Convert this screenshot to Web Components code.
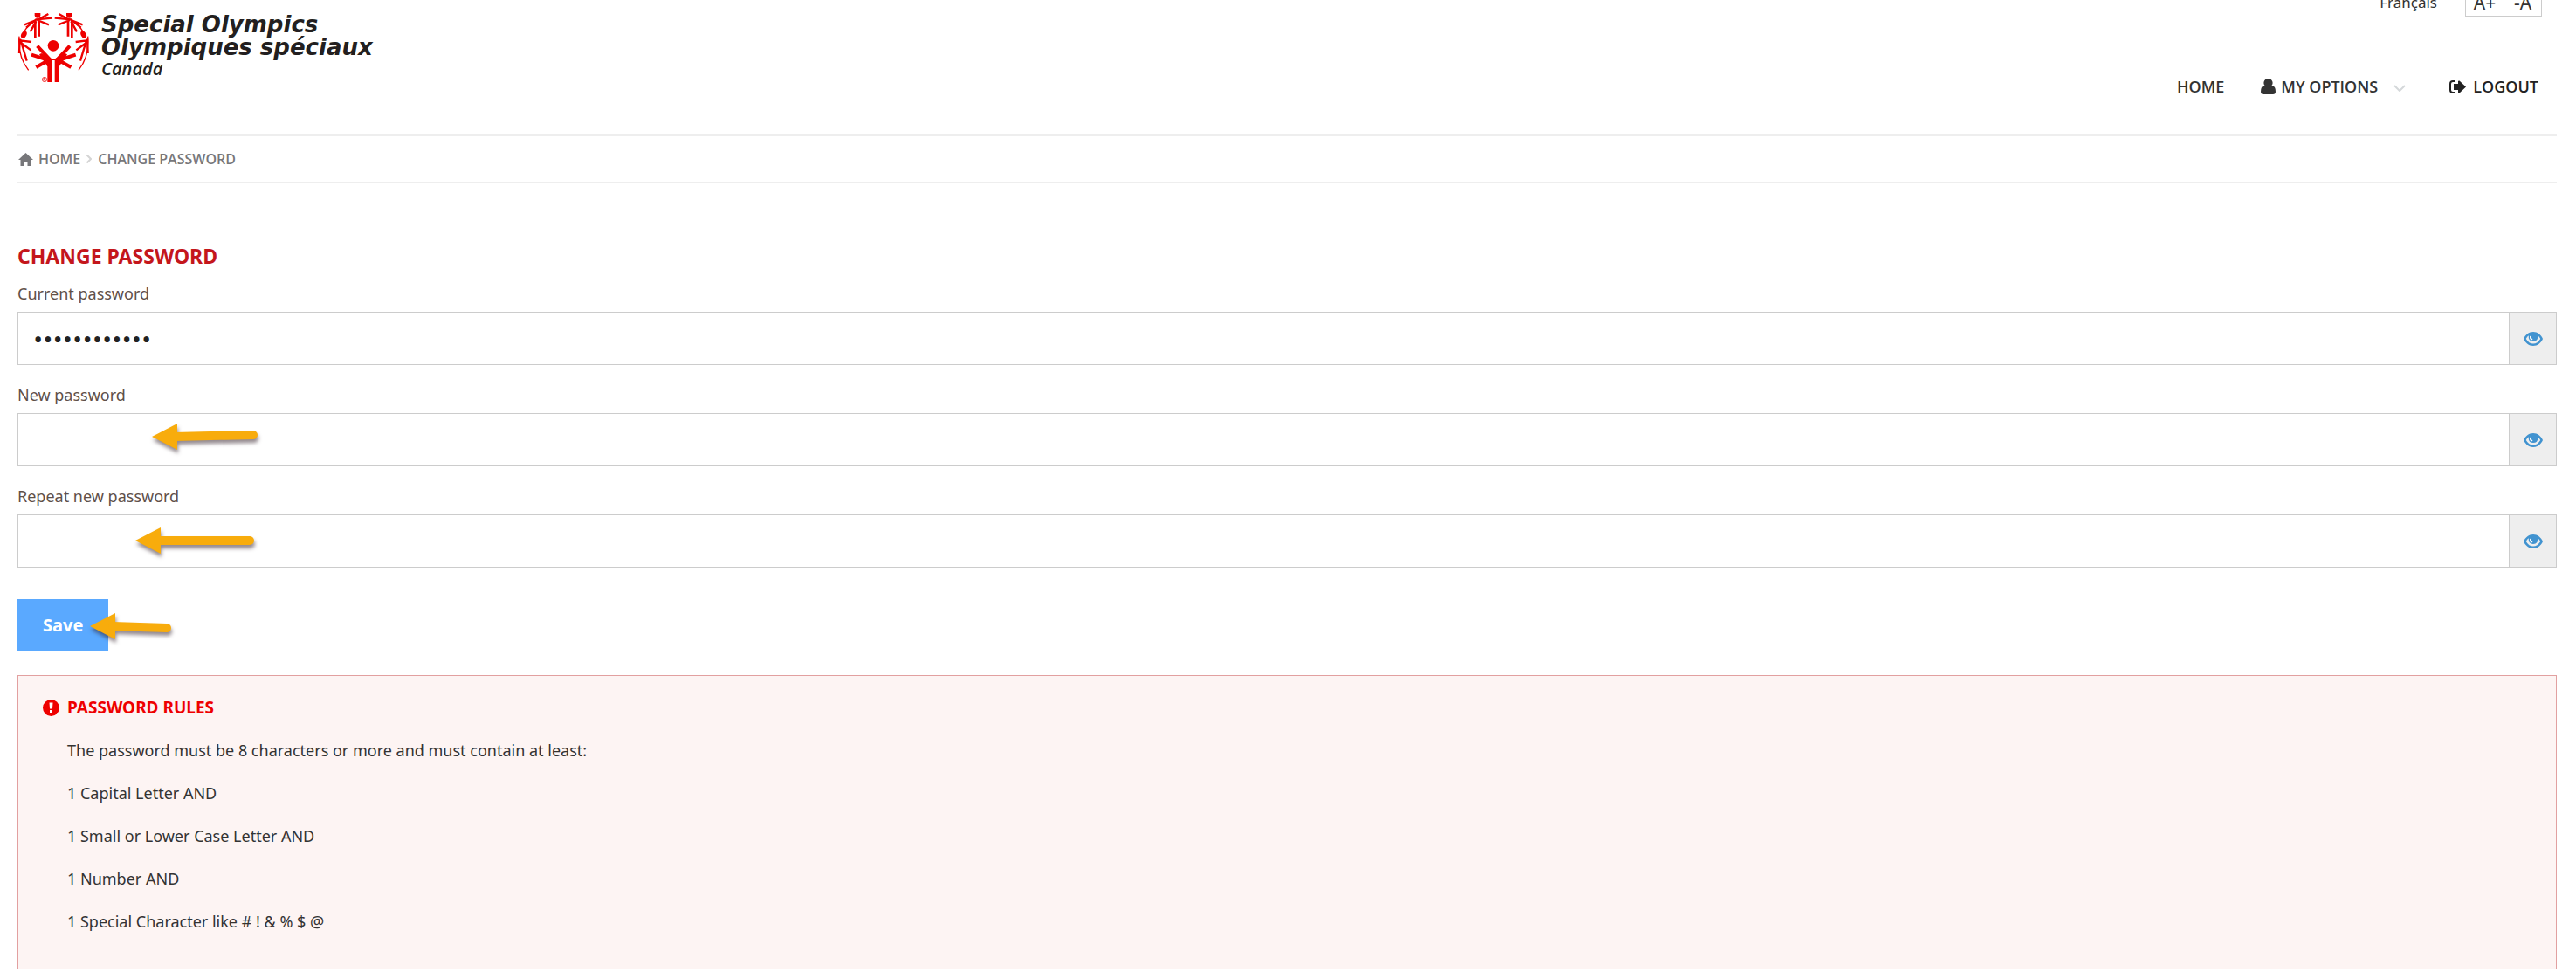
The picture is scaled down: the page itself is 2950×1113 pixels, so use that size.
<!DOCTYPE html>
<html lang="en">
<head>
<meta charset="utf-8">
<title>Change Password</title>
<style>
  body {
    margin: 0;
    padding: 0 22px 0 20px;
    background: #fff;
    color: #333;
    font: 18px/28px "Noto Sans", "Open Sans", sans-serif;
  }
</style>
</head>
<body>
<site-header></site-header>
<bread-crumbs></bread-crumbs>
<password-form></password-form>
<password-rules heading="PASSWORD RULES">
  <p>The password must be 8 characters or more and must contain at least:</p>
  <p>1 Capital Letter AND</p>
  <p>1 Small or Lower Case Letter AND</p>
  <p>1 Number AND</p>
  <p>1 Special Character like # ! &amp; % $ @</p>
</password-rules>

<script>
// Shared by every element below: fills an open shadow root with the markup
class BaseElement extends HTMLElement {
  constructor () {
    super()
    this.shadow = this.attachShadow({mode: 'open'})
  }
  connectedCallback () {
    this.shadow.innerHTML = this.template()
  }
}

/*
* Emblem and the three lines of the wordmark
 */
window.customElements.define(
  'site-logo',
  class extends BaseElement {
    template () {
      // One side of the ring of figures, mirrored for the other side
      const side = `
        <path stroke-width="12" d="M142 190L98 143M138 192L78 173M136 192L94 216"/>
        <path stroke-width="8" d="M91 115V56M104 110V56"/>
        <path stroke-width="7" d="M60 80L94 52L150 47M98 54L136 33M94 54L54 70M98 54L138 70"/>
        <path stroke-width="7" d="M94 58L74 94M38 118L36 168M40 124L78 129M42 132L76 157M40 120L62 194"/>
        <path stroke-width="4" d="M54 92Q66 72 84 62M36 110Q30 178 68 226"/>
      `
      return `
        <style>
          :host { display: block; }
          a {
            display: flex;
            gap: 14px;
            color: #231f20;
            text-decoration: none;
          }
          svg { width: 82px; height: 79px; flex: none; }
          .words { display: flex; flex-direction: column; white-space: nowrap; }
          .name {
            font: italic bold 26px/26px "DejaVu Sans", sans-serif;
          }
          .country {
            font: italic 600 20px/24px "Open Sans", sans-serif;
          }
        </style>
        <a href="#" aria-label="Special Olympics Canada">
          <svg viewBox="30 30 246 237" fill="none" stroke="#e00">
            <g fill="#e00" stroke="none">
              <circle cx="153" cy="142" r="19"/>
              <path d="M89 30h20v8q-2 9-10 9t-10-9z"/>
              <path d="M198 30h20v8q-2 9-10 9t-10-9z"/>
              <ellipse cx="52" cy="104" rx="9" ry="13" transform="rotate(28 52 104)"/>
              <ellipse cx="257" cy="104" rx="9" ry="13" transform="rotate(-28 257 104)"/>
              <path d="M133 267V214L105 172L112 168L142 184Q153 192 164 184L194 168L201 172L173 214V267H158V192H150V267Z"/>
            </g>
            <g>${side}</g>
            <g transform="translate(308 0) scale(-1 1)">${side}</g>
            <circle cx="123" cy="258" r="8" stroke-width="2"/>
            <path stroke-width="2" d="M120 263V253H124Q127 256 124 258H120M124 258L127 263"/>
          </svg>
          <span class="words">
            <span class="name">Special Olympics</span>
            <span class="name">Olympiques spéciaux</span>
            <span class="country">Canada</span>
          </span>
        </a>
      `
    }
  }
)

window.customElements.define(
  'site-header',
  class extends BaseElement {
    template () {
      return `
        <style>
          :host {
            display: flex;
            justify-content: space-between;
            height: 154px;
            overflow: hidden;
            border-bottom: 2px solid #eee;
          }
          site-logo { margin-top: 15px; }
          .side {
            display: flex;
            flex-direction: column;
            align-items: flex-end;
            gap: 66px;
            margin-top: -21px;
          }
          a { color: #333; text-decoration: none; }
          .tools {
            display: flex;
            gap: 32px;
            padding-right: 17px;
          }
          .tools a {
            padding-top: 8px;
            font-size: 17px;
            line-height: 32px;
          }
          .sizes { display: flex; }
          .sizes button {
            box-sizing: border-box;
            width: 45px;
            height: 40px;
            padding: 8px 0 0;
            border: 1px solid #ccc;
            background: #fff;
            color: #333;
            font: 21px/30px "Noto Sans", sans-serif;
          }
          .sizes button + button { width: 43px; border-left: 0; }
          nav {
            display: flex;
            align-items: center;
            padding-right: 21px;
            font-family: "Open Sans", sans-serif;
            font-weight: 600;
          }
          nav a { display: flex; align-items: center; }
          .options { gap: 6px; margin-left: 42px; }
          .logout { gap: 8px; margin-left: 50px; color: #222; }
          .chevron { margin: 4px 0 0 12px; }
        </style>
        <site-logo></site-logo>
        <div class="side">
          <div class="tools">
            <a href="#">Français</a>
            <div class="sizes">
              <button type="button">A+</button>
              <button type="button">-A</button>
            </div>
          </div>
          <nav>
            <a href="#">HOME</a>
            <a class="options" href="#">
              <svg width="17" height="18" viewBox="0 0 17 18" fill="#333">
                <path d="M8.500 0a5 5 0 0 1 3.500 8.600a5 5 0 0 1-7 0A5 5 0 0 1 8.500 0zM4 8q4.500 3.600 9 0q4 .6 4 7q0 3-3 3H3q-3 0-3-3q0-6.400 4-7z"/>
              </svg>
              MY OPTIONS
              <svg class="chevron" width="14" height="8" viewBox="0 0 14 8" fill="none" stroke="#d5d8da" stroke-width="2">
                <path d="M1 1l6 6l6-6"/>
              </svg>
            </a>
            <a class="logout" href="#">
              <svg width="19" height="15" viewBox="0 0 19 15" fill="#222">
                <path d="M7 0v2H4Q2 2 2 4v7q0 2 2 2h3v2H4q-4 0-4-4V4q0-4 4-4z"/>
                <path d="M5 4h5V1q.5-1 1.500-.4L19 7.500l-7.500 6.900q-1 .6-1.500-.4v-3H5z"/>
              </svg>
              LOGOUT
            </a>
          </nav>
        </div>
      `
    }
  }
)

window.customElements.define(
  'bread-crumbs',
  class extends BaseElement {
    template () {
      return `
        <style>
          :host {
            display: block;
            padding: 12px 1px;
            border-bottom: 2px solid #eee;
          }
          nav {
            display: flex;
            align-items: center;
            gap: 7px;
            color: #77777a;
            font-family: "Open Sans", sans-serif;
            font-size: 16px;
            font-weight: 600;
          }
          a {
            display: flex;
            align-items: center;
            gap: 6px;
            color: inherit;
            text-decoration: none;
          }
        </style>
        <nav aria-label="Breadcrumb">
          <a href="#">
            <svg width="17" height="15" viewBox="0 0 17 15" fill="#77777a">
              <path d="M8.500 0L17 8h-2.500v7H10.500v-5h-4v5H2.500V8H0z"/>
            </svg>
            HOME
          </a>
          <svg width="6" height="10" viewBox="0 0 6 10" fill="none" stroke="#d5d5d5" stroke-width="2">
            <path d="M.5 .5L5 5L.5 9.500"/>
          </svg>
          <span>CHANGE PASSWORD</span>
        </nav>
      `
    }
  }
)

/*
* length  - integer   distance from the tip to the end of the tail
* drop    - integer   how far the tail sits below the tip, may be negative
 */
window.customElements.define(
  'pointer-arrow',
  class extends BaseElement {
    template () {
      const length = Number(this.getAttribute('length'))
      const tail = 15 + Number(this.getAttribute('drop') || 0)
      return `
        <style>
          :host {
            display: block;
            position: absolute;
            pointer-events: none;
          }
          svg {
            display: block;
            overflow: visible;
            filter: drop-shadow(1px 4px 2px rgba(40, 20, 30, 0.5));
          }
        </style>
        <svg width="${length}" height="30" fill="#f8ac0c">
          <path d="M0 15L29 0V30z"/>
          <path d="M26 15L${length - 5} ${tail}" stroke="#f8ac0c" stroke-width="10" stroke-linecap="round"/>
        </svg>
      `
    }
  }
)

/*
* label   - string
* value   - string    initial value
* The eye button shows or hides what was typed
 */
window.customElements.define(
  'password-field',
  class extends BaseElement {
    template () {
      return `
        <style>
          :host { display: block; position: relative; }
          label {
            display: block;
            margin-bottom: 7px;
            color: #5f5049;
          }
          .group { display: flex; height: 61px; }
          input, button {
            box-sizing: border-box;
            margin: 0;
            border: 1px solid #ccc;
            border-radius: 0;
          }
          input {
            flex: 1;
            min-width: 0;
            padding: 0 17px;
            border-right: 0;
            background: #fff;
            color: #222;
            font: 19px "Open Sans", sans-serif;
            outline: 0;
          }
          input[type="password"] { font-size: 30px; }
          button {
            display: grid;
            place-items: center;
            width: 55px;
            padding: 0;
            background: #eee;
          }
        </style>
        <label for="input">${this.getAttribute('label')}</label>
        <div class="group">
          <input id="input" type="password" value="${this.getAttribute('value') || ''}">
          <button type="button" aria-label="Show password">
            <svg width="22" height="16" viewBox="0 0 22 16">
              <path fill="#4193d0" fill-rule="evenodd" d="M11 0C16 0 20 3.500 22 8C20 12.500 16 16 11 16S2 12.500 0 8C2 3.500 6 0 11 0zM5.800 4.200Q4 5.500 2.800 8Q6 13.500 11 13.500T19.200 8Q18 5.500 16.200 4.200Q17 10.800 11 11Q5 10.800 5.800 4.200z"/>
              <path fill="none" stroke="#fff" stroke-width="1.500" stroke-linecap="round" d="M7.800 5.500Q7.500 8 9.500 8.500"/>
            </svg>
          </button>
        </div>
        <slot></slot>
      `
    }
    connectedCallback () {
      super.connectedCallback()
      const input = this.shadow.querySelector('input')
      this.shadow.querySelector('button').addEventListener('click', () => {
        input.type = input.type === 'password' ? 'text' : 'password'
      })
    }
  }
)

window.customElements.define(
  'password-form',
  class extends BaseElement {
    template () {
      return `
        <style>
          :host { display: block; padding-top: 68px; }
          h1 {
            margin: 0 0 14px;
            color: #c4161c;
            font-size: 23px;
            font-weight: 700;
            line-height: 30px;
          }
          form { display: flex; flex-direction: column; gap: 20px; }
          .actions {
            position: relative;
            align-self: flex-start;
            margin-top: 16px;
          }
          .actions button {
            display: block;
            height: 59px;
            padding: 0 29px;
            border: 0;
            background: #5aa9ff;
            color: #fff;
            font: bold 20px "Noto Sans", sans-serif;
          }
          .new { left: 154px; top: 47px; }
          .repeat { left: 135px; top: 50px; }
          .save { left: 83px; top: 16px; }
        </style>
        <h1>CHANGE PASSWORD</h1>
        <form>
          <password-field label="Current password" value="olympics1234"></password-field>
          <password-field label="New password">
            <pointer-arrow class="new" length="121" drop="-2"></pointer-arrow>
          </password-field>
          <password-field label="Repeat new password">
            <pointer-arrow class="repeat" length="136"></pointer-arrow>
          </password-field>
          <div class="actions">
            <button type="button">Save</button>
            <pointer-arrow class="save" length="93" drop="2"></pointer-arrow>
          </div>
        </form>
      `
    }
  }
)

/*
* heading - string
* The paragraphs are passed in through the slot
 */
window.customElements.define(
  'password-rules',
  class extends BaseElement {
    template () {
      return `
        <style>
          :host {
            display: block;
            margin: 28px 0 4px;
            padding: 22px 28px 40px;
            border: 1px solid #e2a0a0;
            background: #fdf4f3;
          }
          h2 {
            display: flex;
            align-items: center;
            gap: 9px;
            margin: 0 0 21px;
            color: #e00;
            font-size: 19px;
            font-weight: 700;
          }
          .rules {
            display: flex;
            flex-direction: column;
            gap: 21px;
            padding-left: 28px;
          }
          ::slotted(p) { margin: 0; }
        </style>
        <h2>
          <svg width="19" height="19" viewBox="0 0 19 19">
            <circle cx="9.500" cy="9.500" r="9.500" fill="#e00"/>
            <path fill="#fff" d="M7.500 3.500h4l-.5 7H8zM8 12h3v3H8z"/>
          </svg>
          ${this.getAttribute('heading')}
        </h2>
        <div class="rules"><slot></slot></div>
      `
    }
  }
)
</script>
</body>
</html>
